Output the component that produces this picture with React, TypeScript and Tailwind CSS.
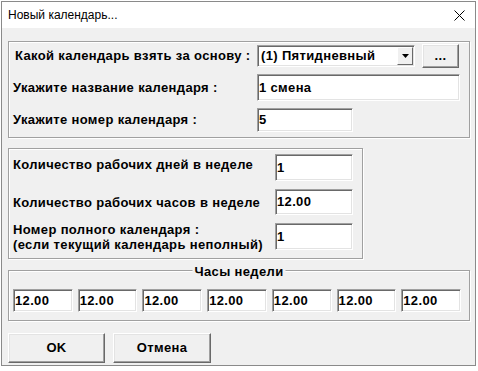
import React from 'react';

const label = "font-['Liberation_Sans',Arial,sans-serif] text-[13px] font-bold tracking-[0.35px] text-black whitespace-nowrap";

function Field({ value, className = '' }: { value: string; className?: string }) {
  return (
    <div
      className={`flex items-center border border-t-[#a0a0a0] border-l-[#a0a0a0] border-b-white border-r-white bg-white pl-[1px] shadow-[inset_1px_1px_0_#696969,inset_-1px_-1px_0_#e3e3e3] ${label} ${className}`}
    >
      {value}
    </div>
  );
}

function Button({ children, className = '' }: { children: React.ReactNode; className?: string }) {
  return (
    <div
      className={`flex items-center justify-center border border-t-white border-l-white border-b-[#696969] border-r-[#696969] bg-[#f0f0f0] shadow-[inset_-1px_-1px_0_#a0a0a0,inset_1px_1px_0_#e3e3e3] ${label} ${className}`}
    >
      {children}
    </div>
  );
}

const group = 'border border-[#a0a0a0] shadow-[inset_1px_1px_0_#fff,1px_1px_0_#fff]';

export default function App() {
  const hours = ['12.00', '12.00', '12.00', '12.00', '12.00', '12.00', '12.00'];

  return (
    <div className="relative h-[371px] w-[478px] overflow-hidden bg-white">
      <div className="ml-[1px] mt-[1px] flex h-[365px] w-[475px] flex-col border border-[#8a8a8a] bg-[#f0f0f0]">
        {/* title bar */}
        <div className="flex h-[26px] items-center justify-between bg-white pl-[6px] pr-[10px]">
          <span className="font-['Liberation_Sans',Arial,sans-serif] text-[12px] text-black">Новый календарь...</span>
          <svg width="11" height="11" viewBox="0 0 11 11">
            <path d="M0.5 0.5 L10.5 10.5 M10.5 0.5 L0.5 10.5" stroke="#000" strokeWidth="1" />
          </svg>
        </div>

        <div className="flex flex-col pl-[6px] pt-[13px]">
          {/* base calendar */}
          <div className={`flex h-[97px] w-[462px] flex-col pt-[2px] ${group}`}>
            <div className="flex h-[24px] items-center">
              <div className={`w-[248px] pl-[6px] ${label}`}>Какой календарь взять за основу :</div>
              <div className={`flex h-[22px] w-[158px] items-stretch border border-t-[#a0a0a0] border-l-[#a0a0a0] border-b-white border-r-white bg-white shadow-[inset_1px_1px_0_#696969,inset_-1px_-1px_0_#e3e3e3] ${label}`}>
                <div className="flex flex-1 items-center pl-[3px]">(1) Пятидневный</div>
                <div className="my-[1px] mr-[1px] flex w-[16px] items-center justify-center border border-t-white border-l-white border-b-[#696969] border-r-[#696969] bg-[#f0f0f0]">
                  <svg width="7" height="4" viewBox="0 0 7 4">
                    <path d="M0 0 H7 L3.5 4 Z" fill="#000" />
                  </svg>
                </div>
              </div>
              <Button className="ml-[7px] h-[24px] w-[37px]">...</Button>
            </div>
            <div className="mt-[6px] flex h-[27px] items-center">
              <div className={`w-[248px] pl-[4px] ${label}`}>Укажите название календаря :</div>
              <Field value="1 смена" className="h-[27px] w-[203px]" />
            </div>
            <div className="mt-[7px] flex h-[24px] items-center">
              <div className={`w-[248px] pl-[4px] ${label}`}>Укажите номер календаря :</div>
              <Field value="5" className="h-[24px] w-[96px]" />
            </div>
          </div>

          {/* week settings */}
          <div className={`mt-[10px] flex h-[111px] w-[355px] flex-col pt-[5px] ${group}`}>
            <div className="flex h-[27px] items-center">
              <div className={`w-[266px] pb-[6px] pl-[4px] ${label}`}>Количество рабочих дней в неделе</div>
              <Field value="1" className="h-[27px] w-[78px]" />
            </div>
            <div className="mt-[8px] flex h-[26px] items-center">
              <div className={`w-[266px] pl-[4px] pt-[2px] ${label}`}>Количество рабочих часов в неделе</div>
              <Field value="12.00" className="h-[26px] w-[78px]" />
            </div>
            <div className="mt-[8px] flex h-[27px] items-center">
              <div className={`w-[266px] pl-[4px] leading-[15px] ${label}`}>
                Номер полного календаря :
                <br />
                (если текущий календарь неполный)
              </div>
              <Field value="1" className="h-[27px] w-[78px]" />
            </div>
          </div>

          {/* week hours */}
          <div className={`relative mt-[11px] h-[51px] w-[462px] pl-[4px] pr-[8px] pt-[18px] ${group}`}>
            <div className={`absolute left-1/2 top-[-9px] -translate-x-1/2 bg-[#f0f0f0] px-[2px] ${label}`}>Часы недели</div>
            <div className="grid grid-cols-7 gap-[5px]">
              {hours.map((h, i) => (
                <Field key={i} value={h} className="h-[23px]" />
              ))}
            </div>
          </div>

          <div className="mt-[12px] flex gap-[8px]">
            <Button className="h-[30px] w-[97px]">OK</Button>
            <Button className="h-[30px] w-[98px]">Отмена</Button>
          </div>
        </div>
      </div>
    </div>
  );
}
